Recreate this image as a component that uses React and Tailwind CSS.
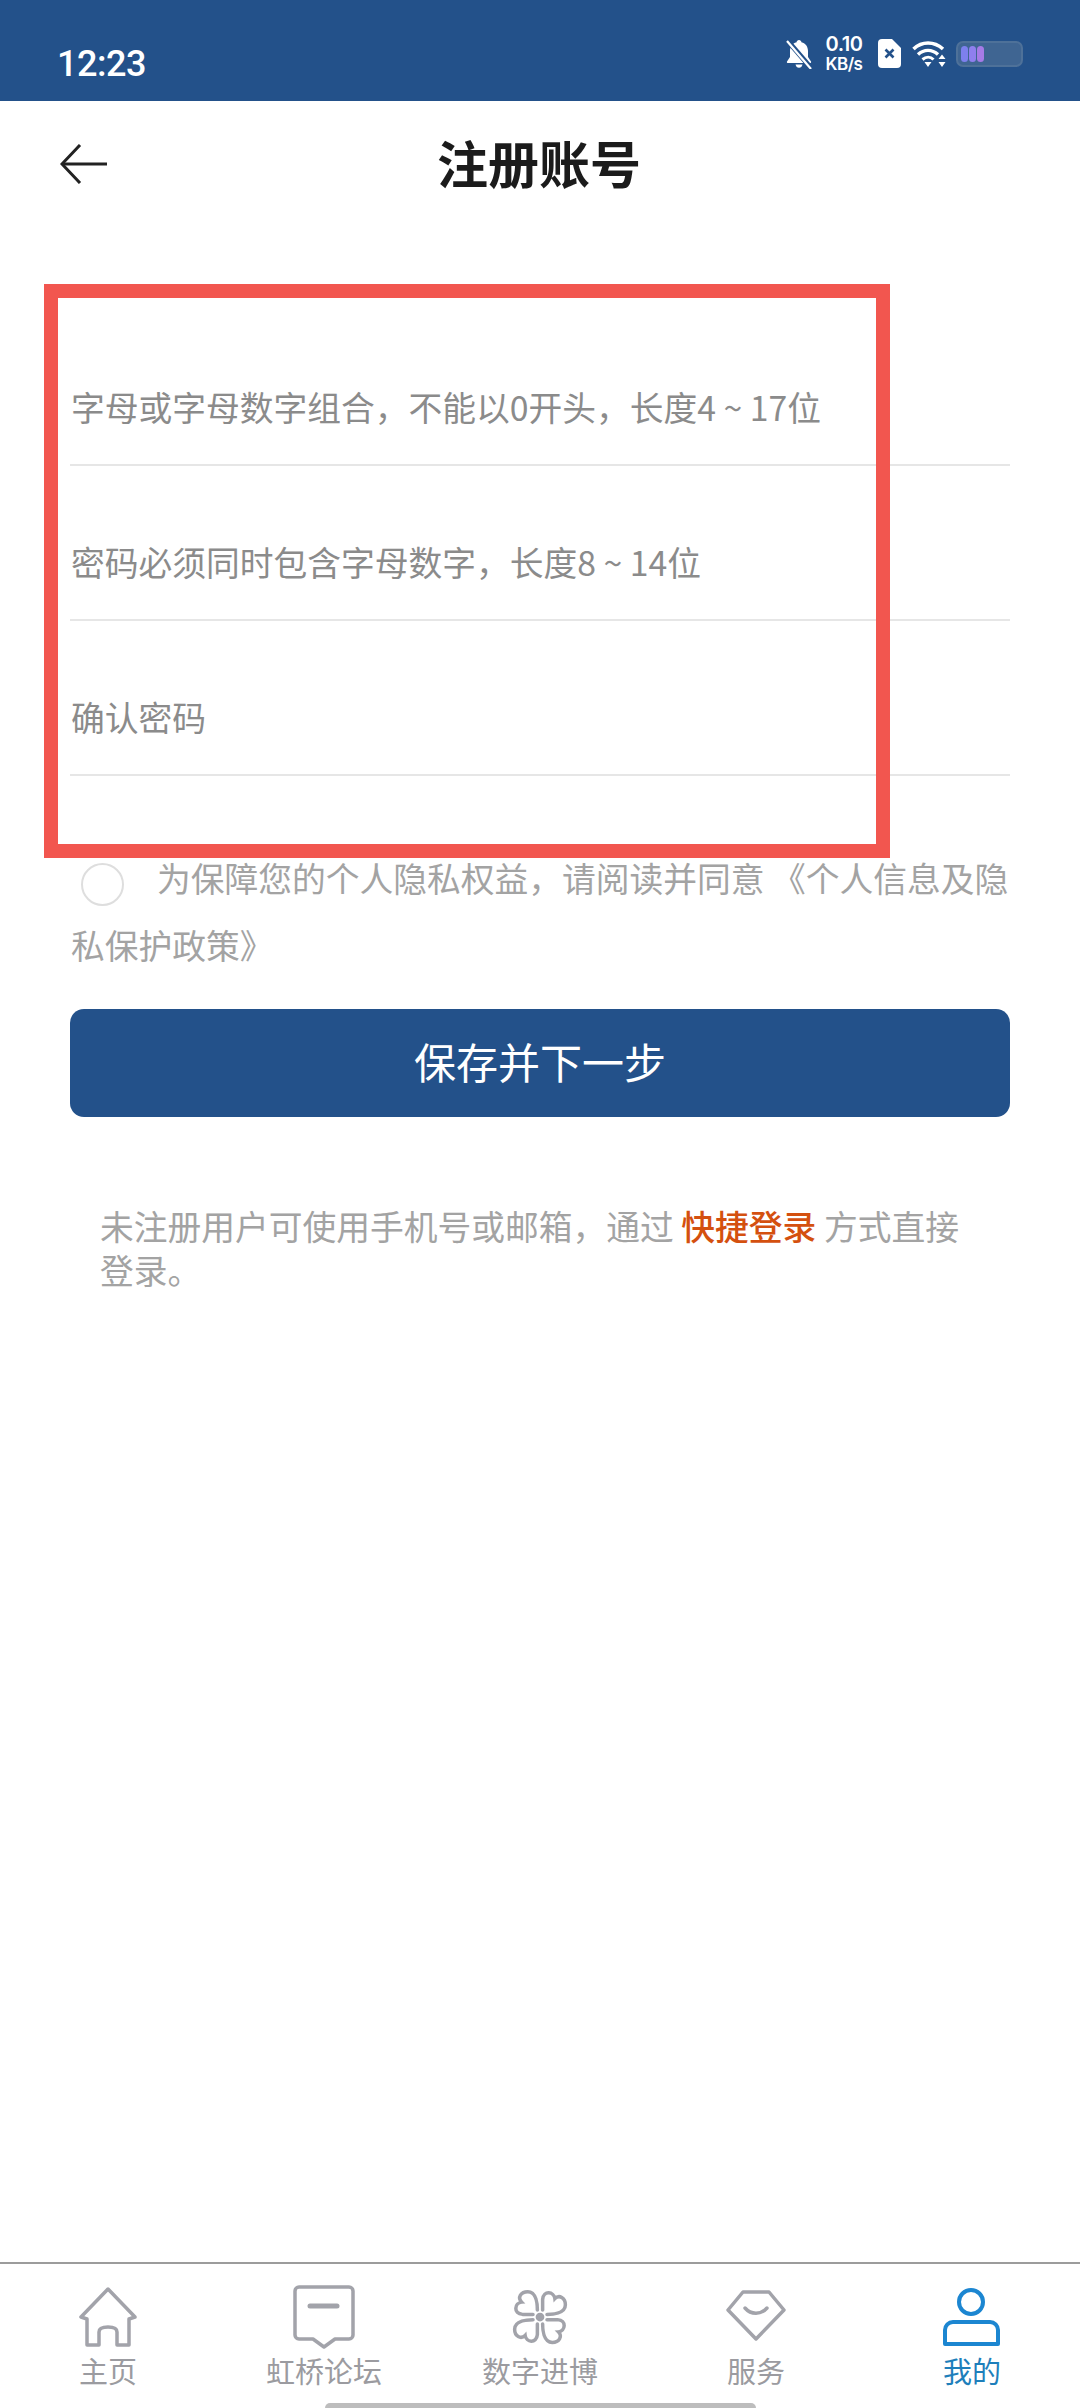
const grayIcon = "#a2a3aa";

function BellOffIcon() {
  return (
    <svg width="26" height="30" viewBox="0 0 26 30">
      <path d="M13 1c1.400 0 2.300 1 2.400 2.200C20 4.300 22 8 22 12v6l3 4.500c.4.800 0 1.500-1 1.500H2c-1 0-1.400-.7-1-1.500L4 18v-6c0-4 2-7.700 6.600-8.800C10.700 2 11.600 1 13 1z" fill="#fff" />
      <path d="M9.500 25.500h7c-.4 2-1.800 3.300-3.500 3.300s-3.100-1.300-3.500-3.300z" fill="#fff" />
      <path d="M1 1l24 28" stroke="#23518a" strokeWidth="5" />
      <path d="M1 2l24 28" stroke="#fff" strokeWidth="2.200" />
    </svg>
  );
}

function SimIcon() {
  return (
    <svg width="23" height="29" viewBox="0 0 23 29">
      <path d="M4 0h10l9 9v16a4 4 0 0 1-4 4H4a4 4 0 0 1-4-4V4a4 4 0 0 1 4-4z" fill="#fff" />
      <path d="M7.500 10.500l8 8M15.500 10.500l-8 8" stroke="#23518a" strokeWidth="2.600" />
    </svg>
  );
}

function WifiIcon() {
  return (
    <svg width="34" height="27" viewBox="0 0 34 27" fill="none">
      <path d="M1.500 9C10 1 22 1 31 9" stroke="#fff" strokeWidth="3.600" />
      <path d="M6 14.500c6-5.500 14-5.500 20 0" stroke="#fff" strokeWidth="3.400" />
      <path d="M10.500 19.500c3.500-3 8-3 11 0" stroke="#fff" strokeWidth="3" />
      <path d="M12.500 22h7L16 27z" fill="#fff" />
      <path d="M30 14.500l3.500 4.500h-7zM30 27l-3.500-5h7z" fill="#fff" />
    </svg>
  );
}

function BatteryIcon() {
  return (
    <div className="flex h-[26px] w-[67px] gap-px rounded-[7px] border-2 border-[#4e7199] bg-[#3f6592] px-[3px] py-[3px]">
      <span className="w-[7px] rounded-sm bg-[#7d80ee]" />
      <span className="w-[7px] rounded-sm bg-[#8f7fee]" />
      <span className="w-[7px] rounded-sm bg-[#a67be6]" />
    </div>
  );
}

function StatusBar() {
  return (
    <div className="flex h-[101px] shrink-0 items-start bg-[#23518a] pl-[57px] pr-[57px] text-white">
      <span className="mt-[43px] font-['Roboto',sans-serif] text-[36px] leading-[42px] font-medium tracking-[-0.5px]">12:23</span>
      <div className="ml-auto mt-[33px] flex items-center">
        <BellOffIcon />
        <div className="ml-[11px] flex w-[42px] flex-col items-center font-['Inter',sans-serif] font-semibold">
          <span className="text-[20px] leading-[22px] tracking-[-0.5px]">0.10</span>
          <span className="text-[17px] leading-[19px] tracking-[-0.5px]">KB/s</span>
        </div>
        <div className="ml-[13px]"><SimIcon /></div>
        <div className="ml-[11px]"><WifiIcon /></div>
        <div className="ml-[10px]"><BatteryIcon /></div>
      </div>
    </div>
  );
}

function TopNav() {
  return (
    <div className="flex h-[125px] shrink-0 items-center pl-[60px] pt-[1px]">
      <svg width="48" height="40" viewBox="0 0 48 40" fill="none" stroke="#222" strokeWidth="3">
        <path d="M47 20H3" />
        <path d="M20 1L2 20l18 19" />
      </svg>
      <h1 className="mb-[5px] ml-[326px] w-[210px] text-center text-[51px] leading-[60px] font-bold text-[#1b1b1b]">注册账号</h1>
    </div>
  );
}

function FormRow({ children }) {
  return (
    <div className="flex h-[155px] items-end border-b-2 border-[#e6e6e6] pb-[33px] pl-px text-[33.75px] leading-[48px] text-[#8b8b8b]">
      {children}
    </div>
  );
}

function TabBar() {
  const tabs = [
    {
      label: "主页",
      icon: (
        <svg width="58" height="60" viewBox="0 0 58 60" fill="none" stroke={grayIcon} strokeWidth="3.500" strokeLinejoin="round">
          <path d="M29 2L2 30l6 2v26h12V45c0-3 3-5 9-5s9 2 9 5v13h12V32l6-2z" />
        </svg>
      ),
    },
    {
      label: "虹桥论坛",
      icon: (
        <svg width="62" height="64" viewBox="0 0 62 64" fill="none" stroke={grayIcon} strokeWidth="3.500" strokeLinejoin="round" strokeLinecap="round">
          <path d="M6 2h50a4 4 0 0 1 4 4v44a4 4 0 0 1-4 4H42L31 62 20 54H6a4 4 0 0 1-4-4V6a4 4 0 0 1 4-4z" />
          <path d="M17 21h27" strokeWidth="5" />
        </svg>
      ),
    },
    {
      label: "数字进博",
      icon: (
        <svg width="70" height="70" viewBox="0 0 80 80" fill="none" stroke={grayIcon} strokeWidth="4" strokeLinecap="round" className="-my-[3px]">
          <g transform="translate(40 40)">
            {[0, 90, 180, 270].map((angle) => (
              <path key={angle} transform={`rotate(${angle})`} d="M-3-8C-3-14-4-29-14-29C-22-29-26-22-21-17C-29-16-31-4-20-3C-16-3-12-3-8-3" />
            ))}
            <circle r="5" fill={grayIcon} stroke="none" />
          </g>
        </svg>
      ),
    },
    {
      label: "服务",
      icon: (
        <svg width="80" height="80" viewBox="0 0 80 80" fill="none" stroke={grayIcon} strokeWidth="3.500" strokeLinejoin="round" strokeLinecap="round" className="-my-[10px]">
          <path d="M27 15h26l15 18-28 29L12 33z" />
          <path d="M29 31c6 7 16 7 22 0" />
        </svg>
      ),
    },
    {
      label: "我的",
      active: true,
      icon: (
        <svg width="58" height="60" viewBox="0 0 58 60" fill="none" stroke="#1c86d1" strokeWidth="4">
          <circle cx="28" cy="15" r="12" />
          <path d="M10 35h37a8 8 0 0 1 8 8v14H2V43a8 8 0 0 1 8-8z" strokeLinejoin="round" />
        </svg>
      ),
    },
  ];

  return (
    <div className="mt-auto flex h-[146px] shrink-0 flex-col border-t-2 border-[#9c9c9c]">
      <div className="grid flex-1 grid-cols-5 pt-[21px]">
        {tabs.map((tab) => (
          <div key={tab.label} className="flex flex-col items-center">
            <div className="flex h-[64px] items-center">{tab.icon}</div>
            <span className={`mt-[3px] text-[29px] leading-[36px] ${tab.active ? "text-[#1e7fbb]" : "text-[#9b9ba0]"}`}>{tab.label}</span>
          </div>
        ))}
      </div>
      <div className="mx-auto h-[5px] w-[431px] rounded-t-full bg-[#bdbdbd]" />
    </div>
  );
}

export default function App() {
  return (
    <div className="flex h-[2408px] w-[1080px] flex-col overflow-hidden bg-white font-['Noto_Sans_CJK_SC',sans-serif]">
      <StatusBar />
      <TopNav />

      <main className="relative px-[70px] pt-[85px]">
        <FormRow>字母或字母数字组合，不能以0开头，长度4 ~ 17位</FormRow>
        <FormRow>密码必须同时包含字母数字，长度8 ~ 14位</FormRow>
        <FormRow>确认密码</FormRow>

        <p className="mt-[68px] pl-px text-[33.75px] leading-[67px] text-[#a3a3a3]">
          <span className="ml-[10px] mr-[33px] inline-block h-[43px] w-[43px] translate-y-[14px] rounded-full border-2 border-[#dedede]" />
          为保障您的个人隐私权益，请阅读并同意 《个人信息及隐私保护政策》
        </p>

        <button className="mt-[31px] h-[108px] w-full rounded-[14px] bg-[#23518a] pb-[6px] text-[42px] text-white">保存并下一步</button>

        <p className="mt-[87px] pl-[30px] pr-[30px] text-[33.75px] leading-[44px] text-[#a3a3a3]">
          未注册用户可使用手机号或邮箱，通过 <span className="font-medium text-[#d4500f]">快捷登录</span> 方式直接登录。
        </p>

        {/* red annotation frame drawn over the form */}
        <div className="absolute left-[44px] top-[58px] h-[574px] w-[846px] border-[14px] border-[#f2564f]" />
      </main>

      <TabBar />
    </div>
  );
}
